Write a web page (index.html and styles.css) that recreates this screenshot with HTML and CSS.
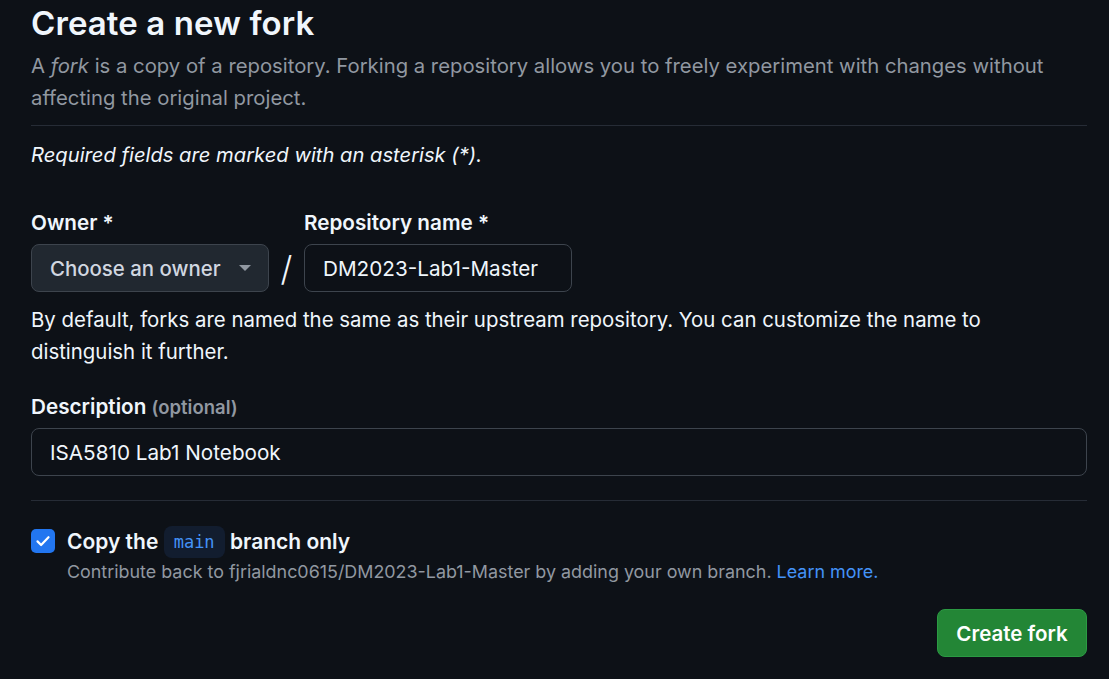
FILE: index.html
```html
<!DOCTYPE html>
<html lang="en">
<head>
<meta charset="utf-8">
<title>Create a new fork</title>
<link rel="stylesheet" href="styles.css">
</head>
<body>
<main class="page">
  <h1 class="title">Create a new fork</h1>
  <p class="intro">A <em>fork</em> is a copy of a repository. Forking a repository allows you to freely experiment with changes without affecting the original project.</p>
  <hr class="rule">
  <p class="required">Required fields are marked with an asterisk (*).</p>

  <div class="name-row">
    <div class="field">
      <label class="label">Owner *</label>
      <button class="select" type="button">
        <span>Choose an owner</span>
        <svg class="caret" width="12" height="6" viewBox="0 0 12 6"><path d="M0 0h12L6 6z" fill="#9198a1"/></svg>
      </button>
    </div>
    <div class="slash">/</div>
    <div class="field">
      <label class="label">Repository name *</label>
      <input class="input repo" type="text" value="DM2023-Lab1-Master">
    </div>
  </div>
  <p class="note">By default, forks are named the same as their upstream repository. You can customize the name to distinguish it further.</p>

  <div class="field desc-field">
    <label class="label">Description <span class="optional">(optional)</span></label>
    <input class="input desc" type="text" value="ISA5810 Lab1 Notebook">
  </div>

  <hr class="rule rule2">

  <div class="check-row">
    <span class="checkbox">
      <svg width="18" height="18" viewBox="0 0 18 18"><path d="M3.5 9.4l3.6 3.6L14.5 5.2" fill="none" stroke="#fff" stroke-width="2.2" stroke-linecap="round" stroke-linejoin="round"/></svg>
    </span>
    <div class="check-text">
      <div class="check-label">Copy the <code class="chip">main</code> branch only</div>
      <div class="check-note">Contribute back to fjrialdnc0615/DM2023-Lab1-Master by adding your own branch. <a href="#" class="link">Learn more.</a></div>
    </div>
  </div>

  <div class="actions">
    <button class="btn-primary" type="button">Create fork</button>
  </div>
</main>
</body>
</html>
```

FILE: styles.css
```css
html, body {
  margin: 0;
  padding: 0;
  background: #0d1117;
}
body {
  font-family: Inter, "Noto Sans", "Liberation Sans", sans-serif;
  color: #f0f6fc;
}
.page {
  padding: 3px 22px 0 31px;
  display: flex;
  flex-direction: column;
}
.title {
  font-size: 33px;
  line-height: 40px;
  font-weight: 600;
  margin: 0;
  letter-spacing: 0.1px;
}
.intro {
  margin: 7px 0 0;
  font-size: 20.3px;
  line-height: 32px;
  color: #9198a1;
}
.intro em { font-style: italic; }
.rule {
  border: 0;
  border-top: 1px solid #262c36;
  margin: 11px 0 0;
  height: 0;
}
.required {
  margin: 13px 0 0;
  font-size: 20.2px;
  line-height: 32px;
  font-style: italic;
  color: #f0f6fc;
}
.name-row {
  display: flex;
  align-items: flex-end;
  margin-top: 38px;
}
.field {
  display: flex;
  flex-direction: column;
  gap: 7px;
}
.label {
  font-size: 20.7px;
  line-height: 28px;
  font-weight: 600;
  color: #f0f6fc;
}
.select {
  width: 238px;
  height: 48px;
  box-sizing: border-box;
  background: #212830;
  border: 1px solid #3d444d;
  border-radius: 8px;
  color: #d1d7e0;
  font-family: inherit;
  font-size: 20.4px;
  font-weight: 500;
  display: flex;
  align-items: center;
  justify-content: space-between;
  padding: 0 17px 0 18px;
}
.caret { display: block; }
.slash {
  width: 35px;
  height: 48px;
  display: flex;
  align-items: center;
  justify-content: center;
  font-size: 34px;
  font-weight: 300;
  color: #f0f6fc;
}
.input {
  height: 48px;
  box-sizing: border-box;
  background: #0d1117;
  border: 1px solid #3d444d;
  border-radius: 8px;
  color: #f0f6fc;
  font-family: inherit;
  font-size: 20.7px;
  padding: 0 18px;
  outline: none;
}
.repo { width: 268px; }
.note {
  margin: 12px 0 0;
  font-size: 20.4px;
  line-height: 32px;
  color: #f0f6fc;
  max-width: 1030px;
}
.desc-field { margin-top: 25px; gap: 7px; }
.optional {
  font-size: 18.5px;
  color: #9198a1;
  font-weight: 600;
}
.desc { width: 100%; }
.rule2 { margin-top: 24px; }
.check-row {
  display: flex;
  align-items: flex-start;
  gap: 12px;
  margin-top: 25px;
}
.checkbox {
  width: 24px;
  height: 24px;
  border-radius: 5px;
  background: #2276f0;
  display: flex;
  align-items: center;
  justify-content: center;
  margin-top: 3px;
  flex: none;
}
.check-label {
  font-size: 21px;
  line-height: 32px;
  font-weight: 600;
}
.chip {
  display: inline-block;
  font-family: "DejaVu Sans Mono", "Liberation Mono", monospace;
  font-size: 17px;
  line-height: 32px;
  vertical-align: top;
  font-weight: 400;
  color: #4493f8;
  background: #121d2f;
  border-radius: 8px;
  padding: 0 10px;
}
.check-note {
  font-size: 17.9px;
  line-height: 28px;
  color: #9198a1;
}
.link { color: #4493f8; text-decoration: none; }
.actions {
  display: flex;
  justify-content: flex-end;
  margin-top: 23px;
}
.btn-primary {
  width: 150px;
  height: 48px;
  background: #238636;
  border: 1px solid #2b9a43;
  border-radius: 8px;
  color: #ffffff;
  font-family: inherit;
  font-size: 20.5px;
  font-weight: 600;
}
```
